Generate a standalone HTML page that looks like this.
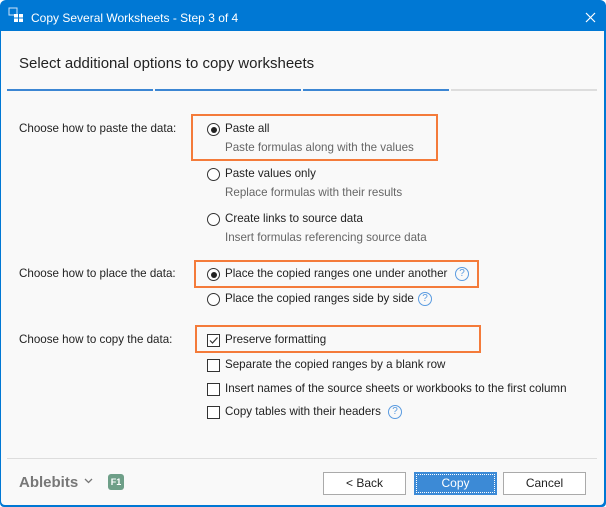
<!DOCTYPE html>
<html><head><style>
*{margin:0;padding:0;box-sizing:border-box}
body{width:606px;height:507px;background:#fff;font-family:"Liberation Sans",sans-serif;font-size:11.6px;color:#222;position:relative;overflow:hidden}
.win{position:absolute;left:0;top:0;width:606px;height:507px;background:#0078d4;border-radius:6px 6px 4px 4px}
.body{position:absolute;left:1px;top:31px;width:603px;height:474px;background:#f9f9f9;border-radius:0 0 4px 4px}
.t{position:absolute;white-space:nowrap;line-height:14px}
.g{color:#666}
.r{position:absolute;width:13px;height:13px;border:1px solid #333;border-radius:50%;background:#fff}
.r.on::after{content:"";position:absolute;left:2.5px;top:2.5px;width:6px;height:6px;border-radius:50%;background:#222}
.c{position:absolute;width:13px;height:13px;border:1px solid #333;background:#fff}
.q{position:absolute;width:14px;height:14px;border:1px solid #5a9be0;border-radius:50%;color:#5a9be0;font-size:10px;line-height:12px;text-align:center}
.box{position:absolute;border:2px solid #f47b3a}
.seg{position:absolute;top:89px;height:2px;width:146px}
.btn{position:absolute;top:472px;width:83px;height:23px;border:1px solid #aaa;background:#fff;text-align:center;line-height:21px;font-size:12px}
</style></head><body>
<div class="win"></div>
<svg style="position:absolute;left:8px;top:7px" width="16" height="16" viewBox="0 0 16 16"><rect x="1" y="1" width="8" height="7" fill="none" stroke="#cfe3f7"/><rect x="6" y="7" width="9" height="8" fill="#fff"/><path d="M6 11h9M10.5 7v8" stroke="#0078d4"/></svg>
<div class="t" style="left:31px;top:11px;color:#fff;font-size:12px">Copy Several Worksheets - Step 3 of 4</div>
<svg style="position:absolute;left:585px;top:12px" width="11" height="11"><path d="M1 1L10 10M10 1L1 10" stroke="#fff" stroke-width="1.2"/></svg>
<div class="body"></div>
<div class="t" style="left:19px;top:55px;font-size:15px;line-height:18px">Select additional options to copy worksheets</div>
<div class="seg" style="left:7px;background:#3c86d3"></div>
<div class="seg" style="left:155px;background:#3c86d3"></div>
<div class="seg" style="left:303px;background:#3c86d3"></div>
<div class="seg" style="left:451px;background:#ddd"></div>

<div class="t" style="left:19px;top:122px">Choose how to paste the data:</div>
<div class="t" style="left:19px;top:267px">Choose how to place the data:</div>
<div class="t" style="left:19px;top:333px">Choose how to copy the data:</div>

<div class="r on" style="left:207px;top:123px"></div><div class="t" style="left:225px;top:122px">Paste all</div>
<div class="t g" style="left:225px;top:141px">Paste formulas along with the values</div>
<div class="r" style="left:207px;top:168px"></div><div class="t" style="left:225px;top:167px">Paste values only</div>
<div class="t g" style="left:225px;top:186px">Replace formulas with their results</div>
<div class="r" style="left:207px;top:213px"></div><div class="t" style="left:225px;top:212px">Create links to source data</div>
<div class="t g" style="left:225px;top:231px">Insert formulas referencing source data</div>
<div class="r on" style="left:207px;top:268px"></div><div class="t" style="left:225px;top:267px">Place the copied ranges one under another</div>
<div class="q" style="left:455px;top:267px">?</div>
<div class="r" style="left:207px;top:293px"></div><div class="t" style="left:225px;top:292px">Place the copied ranges side by side</div>
<div class="q" style="left:418px;top:292px">?</div>

<div class="c" style="left:207px;top:334px"></div>
<svg style="position:absolute;left:208px;top:335px" width="11" height="11"><path d="M2 5.5L4.5 8L9.5 2.5" stroke="#333" fill="none" stroke-width="1.2"/></svg>
<div class="t" style="left:225px;top:333px">Preserve formatting</div>
<div class="c" style="left:207px;top:359px"></div><div class="t" style="left:225px;top:358px">Separate the copied ranges by a blank row</div>
<div class="c" style="left:207px;top:383px"></div><div class="t" style="left:225px;top:382px">Insert names of the source sheets or workbooks to the first column</div>
<div class="c" style="left:207px;top:406px"></div><div class="t" style="left:225px;top:405px">Copy tables with their headers</div>
<div class="q" style="left:388px;top:405px">?</div>

<div class="box" style="left:191px;top:114px;width:247px;height:47px"></div>
<div class="box" style="left:194px;top:260px;width:285px;height:28px"></div>
<div class="box" style="left:195px;top:325px;width:286px;height:28px"></div>

<div style="position:absolute;left:7px;top:458px;width:590px;height:1px;background:#ddd"></div>
<div class="t" style="left:19px;top:474px;font-size:15px;line-height:18px;color:#777;font-weight:bold">Ablebits</div>
<svg style="position:absolute;left:84px;top:478px" width="9" height="6"><path d="M1 1L4.5 4.5L8 1" stroke="#777" fill="none" stroke-width="1.3"/></svg>
<div style="position:absolute;left:108px;top:474px;width:16px;height:16px;background:#6e9f88;border-radius:3px;color:#fff;font-size:9px;font-weight:bold;text-align:center;line-height:16px">F1</div>
<div class="btn" style="left:323px">&lt; Back</div>
<div class="btn" style="left:414px;background:#3c8ad6;border-color:#3c8ad6;color:#fff;outline:1px dotted #fff;outline-offset:-3px">Copy</div>
<div class="btn" style="left:503px">Cancel</div>
</body></html>
